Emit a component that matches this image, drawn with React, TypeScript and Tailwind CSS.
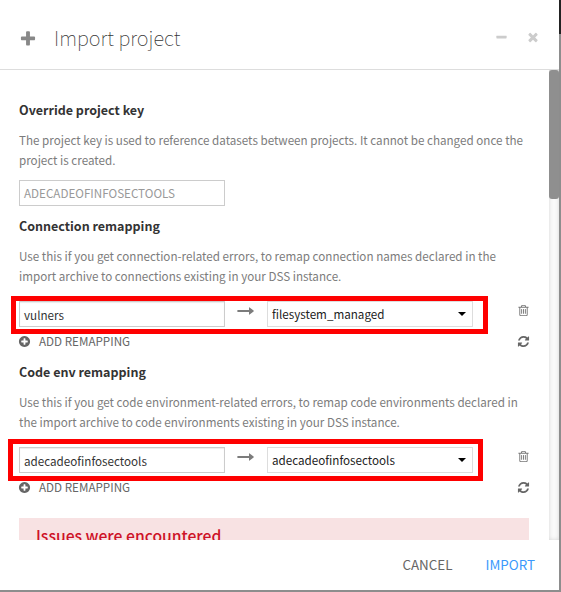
import type { ReactNode } from "react";

const icons = {
  plus: "M1600 736v192q0 40-28 68t-68 28h-416v416q0 40-28 68t-68 28h-192q-40 0-68-28t-28-68v-416h-416q-40 0-68-28t-28-68v-192q0-40 28-68t68-28h416v-416q0-40 28-68t68-28h192q40 0 68 28t28 68v416h416q40 0 68 28t28 68z",
  minus: "M1600 736v192q0 40-28 68t-68 28h-1216q-40 0-68-28t-28-68v-192q0-40 28-68t68-28h1216q40 0 68 28t28 68z",
  times: "M1490 1322q0 40-28 68l-136 136q-28 28-68 28t-68-28l-294-294-294 294q-28 28-68 28t-68-28l-136-136q-28-28-28-68t28-68l294-294-294-294q-28-28-28-68t28-68l136-136q28-28 68-28t68 28l294 294 294-294q28-28 68-28t68 28l136 136q28 28 28 68t-28 68l-294 294 294 294q28 28 28 68z",
  plusCircle: "M1344 960v-128q0-26-19-45t-45-19h-256v-256q0-26-19-45t-45-19h-128q-26 0-45 19t-19 45v256h-256q-26 0-45 19t-19 45v128q0 26 19 45t45 19h256v256q0 26 19 45t45 19h128q26 0 45-19t19-45v-256h256q26 0 45-19t19-45zm320-64q0 209-103 385.5t-279.5 279.5-385.5 103-385.5-103-279.5-279.5-103-385.5 103-385.5 279.5-279.5 385.5-103 385.5 103 279.5 279.5 103 385.5z",
  trash: "M704 736v576q0 14-9 23t-23 9h-64q-14 0-23-9t-9-23v-576q0-14 9-23t23-9h64q14 0 23 9t9 23zm256 0v576q0 14-9 23t-23 9h-64q-14 0-23-9t-9-23v-576q0-14 9-23t23-9h64q14 0 23 9t9 23zm256 0v576q0 14-9 23t-23 9h-64q-14 0-23-9t-9-23v-576q0-14 9-23t23-9h64q14 0 23 9t9 23zm128 724v-948h-896v948q0 22 7 40.5t14.5 27 10.5 8.5h832q3 0 10.5-8.5t14.5-27 7-40.5zm-672-1076h448l-48-117q-7-9-17-11h-317q-10 2-17 11zm928 32v64q0 14-9 23t-23 9h-96v948q0 83-47 143.5t-113 60.5h-832q-66 0-113-58.5t-47-141.5v-952h-96q-14 0-23-9t-9-23v-64q0-14 9-23t23-9h309l70-167q15-37 54-63t79-26h320q40 0 79 26t54 63l70 167h309q14 0 23 9t9 23z",
  refresh: "M1639 1056q0 5-1 7-64 268-268 434.5t-478 166.5q-146 0-282.5-55t-243.5-157l-129 129q-19 19-45 19t-45-19-19-45v-448q0-26 19-45t45-19h448q26 0 45 19t19 45-19 45l-137 137q71 66 161 102t187 36q134 0 250-65t186-179q11-17 53-117 8-23 30-23h192q13 0 22.5 9.5t9.5 22.5zm25-800v448q0 26-19 45t-45 19h-448q-26 0-45-19t-19-45 19-45l138-138q-148-137-349-137-134 0-250 65t-186 179q-11 17-53 117-8 23-30 23h-199q-13 0-22.5-9.5t-9.5-22.5v-7q65-268 270-434.5t480-166.5q146 0 284 55.5t245 156.5l130-129q19-19 45-19t45 19 19 45z",
};

function Icon({ name, className }: { name: keyof typeof icons; className: string }) {
  return (
    <svg viewBox="0 0 1792 1792" fill="currentColor" className={`shrink-0 ${className}`}>
      <path d={icons[name]} />
    </svg>
  );
}

function Arrow() {
  return (
    <svg viewBox="0 0 17 8" className="mt-[6px] ml-3 h-2 w-[17px] shrink-0 text-[#7c7c7c]" fill="currentColor">
      <path d="M0.4 2.9h11.6V0.6Q12 0 12.6 0.4L16.6 3.6Q17 4 16.6 4.4L12.6 7.6Q12 8 12 7.4V5.1H0.4z" />
    </svg>
  );
}

function Heading({ children }: { children: ReactNode }) {
  return <h4 className="h-5 text-[12.5px] leading-5 font-bold text-[#333]">{children}</h4>;
}

function Help({ children }: { children: ReactNode }) {
  return <p className="mt-[10px] text-[11.65px] leading-5 whitespace-nowrap text-[#7c7c7c]">{children}</p>;
}

function Remapping({ from, to, frame }: { from: string; to: string; frame: string }) {
  return (
    <>
      <div className="relative flex h-[26px]">
        <div className="h-[26px] w-[206px] shrink-0 border border-[#ccc] pl-1 text-[11.65px] leading-[25px] text-[#333] shadow-[inset_0_1px_1px_rgba(0,0,0,0.08)]">{from}</div>
        <Arrow />
        <div className="ml-[13px] flex h-[26px] w-[206px] shrink-0 items-center justify-between border border-[#ddd] pr-[6px] pl-1 text-[11.65px] leading-6 text-[#222]">
          <span>{to}</span>
          <svg viewBox="0 0 8 4" className="h-1 w-2" fill="#000"><path d="M0 0h8L4 4z" /></svg>
        </div>
        <Icon name="trash" className="mt-[3px] ml-[44px] size-[13px] text-[#777]" />
        <div className={`absolute border-[5px] border-[#fe0000] ${frame}`} />
      </div>
      <div className="mt-[4px] flex h-5 items-center text-[#666]">
        <Icon name="plusCircle" className="-ml-px size-[13px]" />
        <span className="ml-[8px] text-[11.65px] leading-5">ADD REMAPPING</span>
        <Icon name="refresh" className="mr-[-1px] ml-auto size-[13px]" />
      </div>
    </>
  );
}

export default function App() {
  return (
    <div className="flex h-[592px] w-[561px] overflow-hidden bg-[#8d8d8d] font-['Noto_Sans_CJK_SC','Noto_Sans_CJK_JP',sans-serif]">
      <div className="flex h-[590px] w-[559px] flex-col bg-white">
        <header className="flex h-[70px] shrink-0 items-center border-b border-[#ddd] pt-[7px] pr-[19px] pl-[19px]">
          <Icon name="plus" className="mt-[2px] size-[18px] text-[#888]" />
          <h3 className="ml-[17px] text-[20px] leading-8 font-thin whitespace-nowrap text-[#333]">Import project</h3>
          <Icon name="minus" className="-mt-[2px] ml-auto size-[13px] text-[#ccc]" />
          <Icon name="times" className="-mt-[2px] ml-[18px] size-[14px] text-[#ccc]" />
        </header>
        <div className="flex h-[470px] shrink-0">
          <main className="h-[470px] w-[549px] overflow-hidden pt-[30px] pr-5 pl-[19px]">
            <Heading>Override project key</Heading>
            <Help>
              The project key is used to reference datasets between projects. It cannot be changed once the<br />
              project is created.
            </Help>
            <div className="mt-[10px] mb-[10px] h-[26px] w-[206px] border border-[#ccc] pl-1 text-[11.65px] leading-6 text-[#999]">ADECADEOFINFOSECTOOLS</div>
            <Heading>Connection remapping</Heading>
            <Help>
              Use this if you get connection-related errors, to remap connection names declared in the<br />
              import archive to connections existing in your DSS instance.
            </Help>
            <div className="h-[15px]" />
            <Remapping from="vulners" to="filesystem_managed" frame="top-[-5px] left-[-8px] h-[38px] w-[477px]" />
            <div className="h-[11px]" />
            <Heading>Code env remapping</Heading>
            <Help>
              Use this if you get code environment-related errors, to remap code environments declared in<br />
              the import archive to code environments existing in your DSS instance.
            </Help>
            <div className="h-[15px]" />
            <Remapping from="adecadeofinfosectools" to="adecadeofinfosectools" frame="top-[-8px] left-[-11px] h-[42px] w-[475px]" />
            <div className="mt-[21px] h-20 bg-[#f8e2e3] pt-[6px] pl-[17px] text-[15.7px] leading-6 font-medium text-[#ce1228]">Issues were encountered</div>
          </main>
          <div className="h-[470px] w-[10px] bg-[#fafafa] shadow-[inset_0_0_4px_rgba(0,0,0,0.15)]">
            <div className="h-[129px] w-[10px] rounded-[3px] bg-[#8f8f8f]" />
          </div>
        </div>
        <footer className="flex h-[50px] items-center justify-end pr-6 pb-[3px] text-[13.4px] leading-5">
          <span className="text-[#666]">CANCEL</span>
          <span className="ml-[33px] text-[#3b99fc]">IMPORT</span>
        </footer>
      </div>
      <div className="h-[34px] w-[2px] bg-[#222]" />
    </div>
  );
}
